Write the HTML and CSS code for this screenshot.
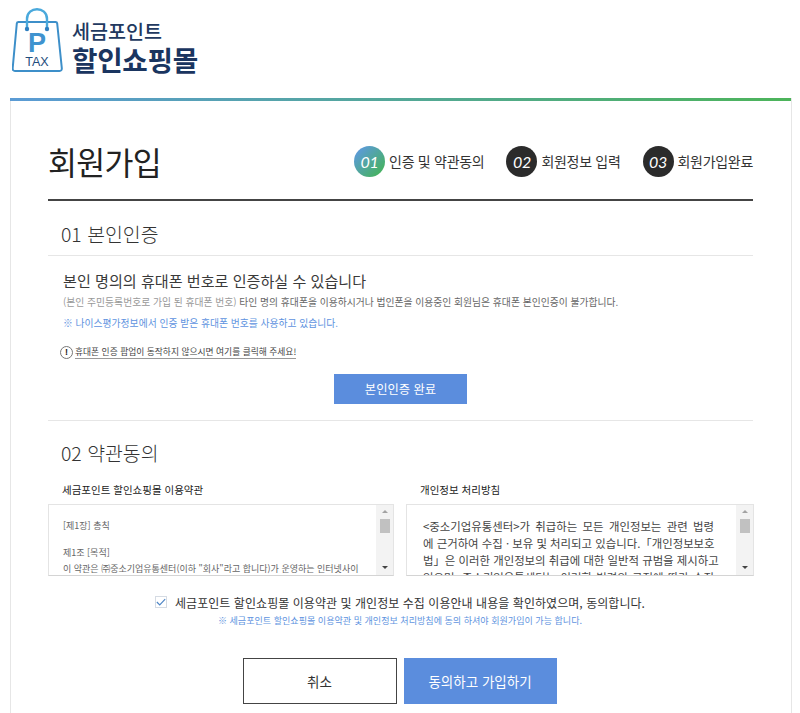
FILE: index.html
```html
<!DOCTYPE html>
<html lang="ko">
<head>
<meta charset="utf-8">
<title>회원가입</title>
<link rel="stylesheet" href="styles.css">
</head>
<body>
<header class="site-header">
  <svg class="logo-icon" width="52" height="66" viewBox="0 0 52 66" aria-hidden="true">
    <path d="M6.500 14H43.500Q45 14 45.200 15.500L49.800 60Q50 63 47.500 63H3Q0.500 63 0.700 60L4.800 15.500Q5 14 6.500 14Z" fill="none" stroke="#3d8fc9" stroke-width="2"/>
    <path d="M15 21V11C15 -2 35 -2 35 11V21" fill="none" stroke="#4aa9dc" stroke-width="2.400"/>
    <circle cx="15" cy="21" r="2.200" fill="#2f7fc0"/><circle cx="35" cy="21" r="2.200" fill="#2f7fc0"/>
    <text x="25" y="44" class="logo-p">P</text>
    <text x="25" y="58" class="logo-tax">TAX</text>
  </svg>
  <div class="logo-text">
    <span class="logo-top">세금포인트</span>
    <span class="logo-main">할인쇼핑몰</span>
  </div>
</header>
<main class="panel">
  <div class="title-row">
    <h1 class="page-title">회원가입</h1>
    <ol class="steps">
      <li class="step"><span class="step-num step-active">01</span>인증 및 약관동의</li>
      <li class="step"><span class="step-num">02</span>회원정보 입력</li>
      <li class="step"><span class="step-num">03</span>회원가입완료</li>
    </ol>
  </div>
  <section class="auth">
    <h2 class="sec-title sec-lined">01 본인인증</h2>
    <div class="auth-body">
      <p class="auth-lead">본인 명의의 휴대폰 번호로 인증하실 수 있습니다</p>
      <p class="auth-note">(본인 주민등록번호로 가입 된 휴대폰 번호) <span class="dark">타인 명의 휴대폰을 이용하시거나 법인폰을 이용중인 회원님은 휴대폰 본인인증이 불가합니다.</span></p>
      <p class="auth-blue">※ 나이스평가정보에서 인증 받은 휴대폰 번호를 사용하고 있습니다.</p>
      <p class="auth-help"><span class="bang">!</span><span class="help-link">휴대폰 인증 팝업이 동작하지 않으시면 여기를 클릭해 주세요!</span></p>
    </div>
    <div class="auth-action"><button class="btn-auth" type="button">본인인증 완료</button></div>
  </section>
  <section class="terms">
    <h2 class="sec-title">02 약관동의</h2>
    <div class="terms-grid">
      <div class="term">
        <h3 class="term-title">세금포인트 할인쇼핑몰 이용약관</h3>
        <div class="term-box">
          <div class="term-text term-small">
            <p>[제1장] 총칙</p>
            <p class="gap">제1조 [목적]</p>
            <p class="dark">이 약관은 ㈜중소기업유통센터(이하 "회사"라고 합니다)가 운영하는 인터넷사이</p>
          </div>
          <div class="scroll"><span class="arr-up"></span><span class="thumb"></span><span class="arr-down"></span></div>
        </div>
      </div>
      <div class="term">
        <h3 class="term-title">개인정보 처리방침</h3>
        <div class="term-box">
          <div class="term-text term-large">
            <span class="jline">&lt;중소기업유통센터&gt;가 취급하는 모든 개인정보는 관련 법령</span>
            <span class="jline">에 근거하여 수집 · 보유 및 처리되고 있습니다.「개인정보보호</span>
            <span class="jline">법」은 이러한 개인정보의 취급에 대한 일반적 규범을 제시하고</span>
            <span class="jline">있으며, 중소기업유통센터는 이러한 법령의 규정에 따라 수집</span>
          </div>
          <div class="scroll"><span class="arr-up"></span><span class="thumb"></span><span class="arr-down"></span></div>
        </div>
      </div>
    </div>
    <label class="agree">
      <span class="check"><svg width="12" height="10" viewBox="0 0 12 10" aria-hidden="true"><path d="M1 5L4.500 8.500L11 1.500" fill="none" stroke="#4f86c6" stroke-width="1.400"/></svg></span>
      세금포인트 할인쇼핑몰 이용약관 및 개인정보 수집 이용안내 내용을 확인하였으며, 동의합니다.
    </label>
    <p class="agree-note">※ 세금포인트 할인쇼핑몰 이용약관 및 개인정보 처리방침에 동의 하셔야 회원가입이 가능 합니다.</p>
    <div class="actions">
      <button class="btn btn-cancel" type="button">취소</button>
      <button class="btn btn-ok" type="button">동의하고 가입하기</button>
    </div>
  </section>
</main>
</body>
</html>
```
FILE: styles.css
```css
* { box-sizing: border-box; margin: 0; padding: 0; }
html, body { height: 713px; overflow: hidden; }
body { background: #fff; font-family: "Noto Sans CJK KR", "Noto Sans", sans-serif; color: #333; }

.site-header { height: 98px; padding: 8px 0 0 12px; display: flex; align-items: flex-start; }
.logo-icon { display: block; flex: none; }
.logo-p { font-family: "Liberation Sans", sans-serif; font-weight: 700; font-size: 27px; fill: #3f93cf; text-anchor: middle; }
.logo-tax { font-family: "Liberation Sans", sans-serif; font-size: 12.500px; font-weight: 400; fill: #1f4d7d; text-anchor: middle; }
.logo-text { margin: 11px 0 0 8px; display: flex; flex-direction: column; }
.logo-top { font-size: 19.600px; line-height: 24px; font-weight: 500; color: #22395f; }
.logo-main { font-size: 27.700px; line-height: 32px; font-weight: 700; color: #1a3560; letter-spacing: -0.300px; }

.panel { margin: 0 8px 0 10px; height: 640px; border: 1px solid #e6e6e6; border-top: 0; padding: 0 38px 0 37px; }
.panel::before { content: ""; display: block; height: 3px; margin: 0 -38px 0 -38px; background: linear-gradient(90deg, #5b9bd5, #4cb45a); }

.title-row { height: 100px; padding-top: 40px; display: flex; justify-content: space-between; align-items: flex-start; border-bottom: 2px solid #444; }
.page-title { font-size: 31.500px; line-height: 40px; font-weight: 400; color: #222; letter-spacing: -0.700px; }
.steps { list-style: none; display: flex; gap: 22px; padding-top: 5px; }
.step { display: flex; align-items: center; gap: 4px; font-size: 14px; color: #333; line-height: 31px; letter-spacing: -0.300px; }
.step-num { width: 31px; height: 31px; border-radius: 50%; background: #2b2b2b; color: #fff; font-family: Lato, sans-serif; font-style: italic; font-size: 16px; text-align: center; line-height: 31px; }
.step-active { background: linear-gradient(135deg, #5b9bd5 15%, #45b35c 90%); }

.sec-title { font-size: 19.400px; line-height: 30px; font-weight: 300; color: #333; padding: 18px 0 0 13px; height: 55px; }
.sec-lined { border-bottom: 1px solid #e6e6e6; }

.auth { height: 220px; border-bottom: 1px solid #e6e6e6; }
.auth-body { padding: 14px 0 0 15px; }
.auth-lead { font-size: 15.100px; line-height: 20px; color: #3a3a3a; }
.auth-note { font-size: 9.800px; line-height: 14px; margin-top: 5px; color: #999; }
.dark { color: #666; }
.auth-blue { font-size: 9.800px; line-height: 14px; margin-top: 7px; color: #5e93e0; }
.auth-help { display: flex; align-items: center; margin: 14px 0 0 -3px; height: 16px; font-size: 8.750px; color: #444; }
.bang { width: 13px; height: 13px; margin-right: 2px; border: 1px solid #777; border-radius: 50%; font: 700 9px/11px "Liberation Sans", sans-serif; text-align: center; color: #222; }
.help-link { border-bottom: 1px solid #999; line-height: 13px; }
.auth-action { margin-top: 14px; text-align: center; }
.btn-auth { width: 133px; height: 30px; border: 0; background: #5b8ddd; color: #fff; font: 400 12.300px/30px "Noto Sans CJK KR", sans-serif; }

.terms .sec-title { height: 51px; padding-top: 17px; }
.terms-grid { display: grid; grid-template-columns: 346px 348px; column-gap: 12px; width: 706px; }
.term-title { font-size: 10.500px; line-height: 16px; font-weight: 400; color: #222; padding: 10px 0 0 14px; height: 32px; }
.term-box { height: 72px; border: 1px solid #e4e4e4; border-bottom-color: #d4d4d4; display: flex; overflow: hidden; }
.term-text { flex: 1; min-width: 0; overflow: hidden; }
.term-small { padding: 13px 6px 0 14px; font-size: 9px; line-height: 16px; color: #666; white-space: nowrap; }
.term-small .gap { margin-top: 11px; }
.term-large { padding: 13px 0 0 16px; font-size: 11.400px; line-height: 17px; color: #444; }
.jline { display: block; width: 291px; white-space: nowrap; text-align: justify; text-align-last: justify; }
.scroll { width: 17px; flex: none; background: #f3f3f3; display: flex; flex-direction: column; align-items: center; }
.thumb { width: 10px; height: 14px; background: #c1c1c1; margin-top: 6px; }
.arr-up { margin-top: 5px; width: 0; height: 0; border: 3px solid transparent; border-top: 0; border-bottom: 3px solid #a3a3a3; }
.arr-down { margin-top: auto; margin-bottom: 6px; width: 0; height: 0; border: 3px solid transparent; border-bottom: 0; border-top: 3px solid #444; }

.agree { display: flex; align-items: center; justify-content: center; gap: 8px; margin-top: 16px; height: 20px; font-size: 12px; color: #333; letter-spacing: 0.050px; width: 704px; }
.check { width: 12px; height: 12px; display: flex; align-items: center; justify-content: center; border: 1px solid #d5dbe3; flex: none; }
.agree-note { margin-top: 2px; width: 704px; text-align: center; font-size: 9.050px; line-height: 14px; color: #5e93e0; font-weight: 400; }
.actions { display: flex; justify-content: center; gap: 7px; margin-top: 30px; width: 703px; }
.btn { height: 46px; font: 400 13.500px/44px "Noto Sans CJK KR", sans-serif; }
.btn-cancel { width: 154px; background: #fff; border: 1px solid #444; color: #333; }
.btn-ok { width: 153px; background: #5b8ddd; border: 1px solid #5b8ddd; color: #fff; }
```
